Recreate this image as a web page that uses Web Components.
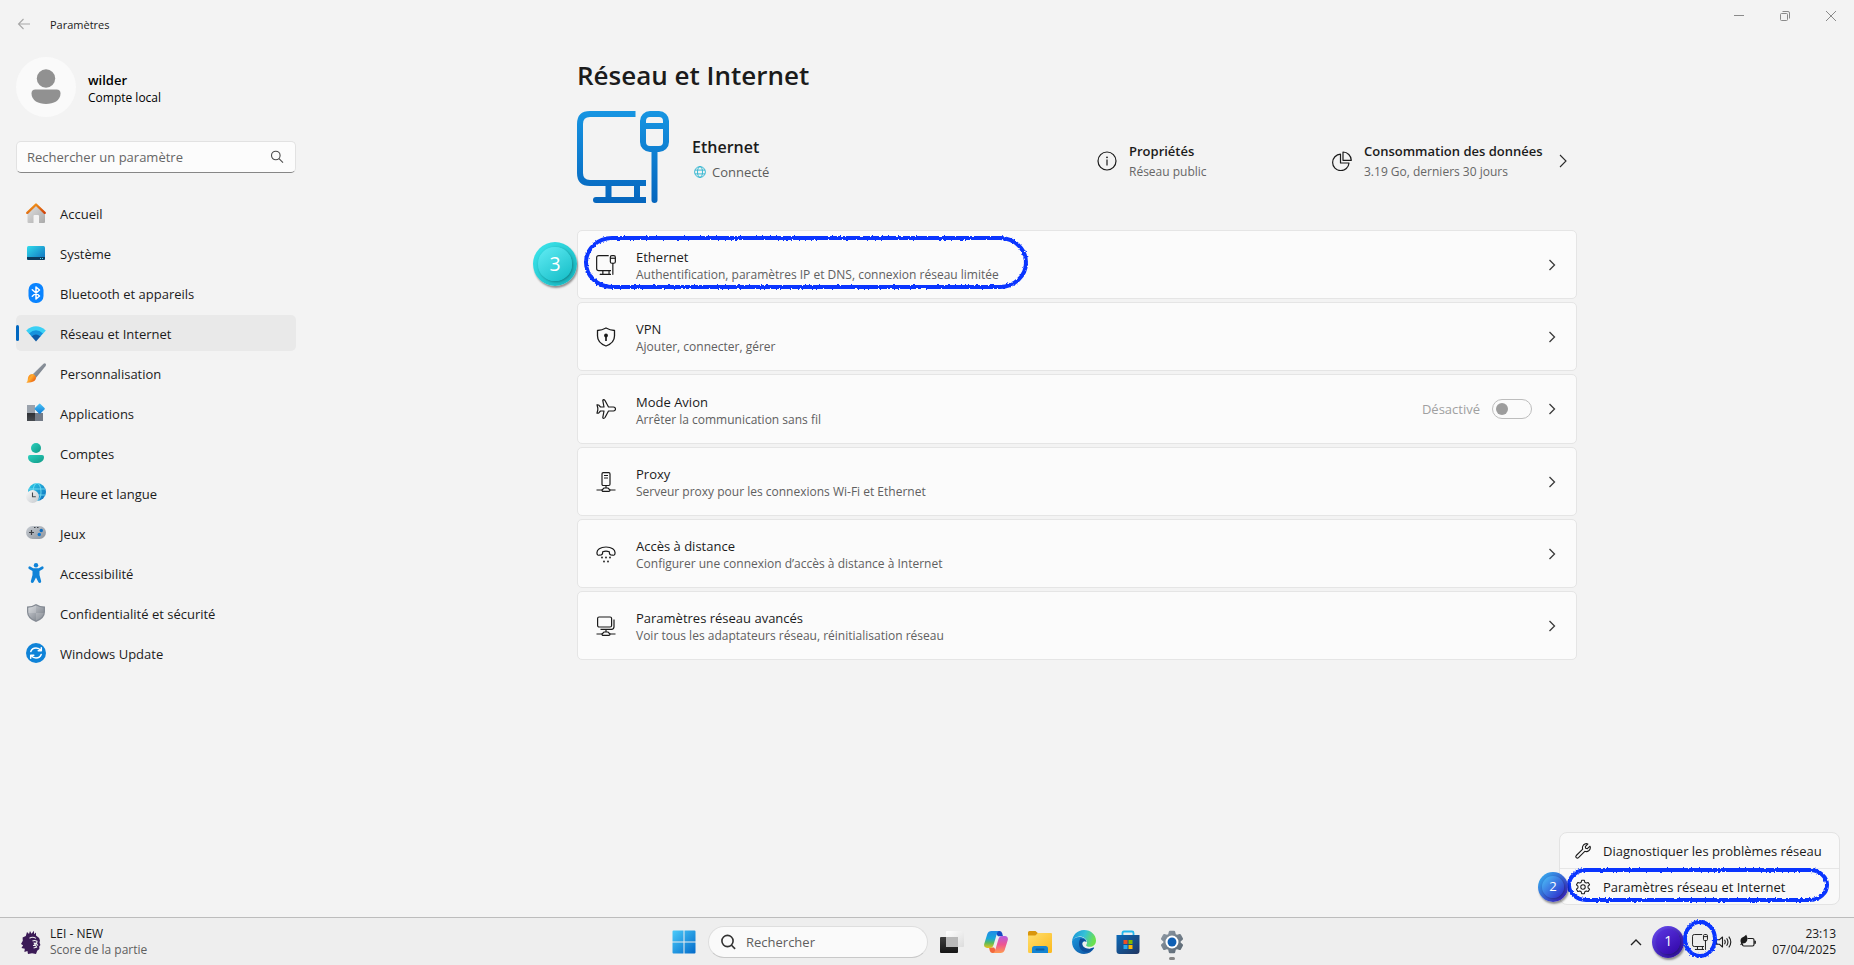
<!DOCTYPE html>
<html lang="fr">
<head>
<meta charset="utf-8">
<title>Paramètres</title>
<style>
  html, body { margin: 0; height: 100%; }
  body {
    display: flex; flex-direction: column; min-height: 100vh;
    background: #f3f3f3; color: #1b1b1b;
    font: 13px/20px "Open Sans", "Noto Sans", sans-serif;
  }
  settings-window { flex: 1; }
</style>
</head>
<body>
<settings-window></settings-window>
<task-bar></task-bar>

<script>
const ETHERNET = `<path d="M58.500 3H13Q3 3 3 13V62Q3 72 13 72H69M31.500 72V89M60 72V89M69 89H20" /><path d="M19 89h3" stroke-linecap="round"/><rect x="66" y="3" width="23" height="35" rx="7"/><path d="M66 15h23"/><path d="M77.500 38v51" stroke-linecap="round"/>`;
const GEAR = `<path stroke-linejoin="round" d="M8.300 1.600h3.400l.6 2.500 1.700 1 2.500-.8 1.700 3-1.900 1.700v2l1.900 1.700-1.700 3-2.500-.8-1.700 1-.6 2.500H8.300l-.6-2.500-1.700-1-2.500.8-1.700-3L3.700 11V9L1.800 7.300l1.700-3 2.500.8 1.700-1z"/>`;
const ICONS = {
  back: ['0 0 16 16', `<g fill="none" stroke="#a8a8a8" stroke-width="1.100"><path d="M14 8H2.500M7.500 3l-5 5 5 5"/></g>`],
  minimize: ['0 0 16 16', `<path d="M3 7.500h10" stroke="#8a8a8a"/>`],
  restore: ['0 0 16 16', `<g fill="none" stroke="#8a8a8a"><rect x="3.500" y="5.500" width="7" height="7" rx="1"/><path d="M5.500 3.500h5.500q1.500 0 1.500 1.500v5.500"/></g>`],
  close: ['0 0 16 16', `<path d="M3 3l10 10M13 3L3 13" stroke="#8a8a8a"/>`],
  avatar: ['0 0 60 60', `<circle cx="30" cy="30" r="30" fill="#fafafa"/><g fill="#919191"><circle cx="30" cy="21.500" r="9.200"/><path d="M19.500 32.500h21q4 0 4 4c0 7-7 10.500-14.500 10.500S15.500 43.500 15.500 36.500q0-4 4-4z"/></g>`],
  search: ['0 0 16 16', `<g fill="none" stroke="#4a4a4a" stroke-width="1.100"><circle cx="6.800" cy="6.500" r="4.300"/><path d="M10 9.700l4 4"/></g>`],
  searchBold: ['0 0 16 16', `<g fill="none" stroke="#333" stroke-width="1.600"><circle cx="7.500" cy="7" r="5.600"/><path d="M11.300 11l3.800 3.900"/></g>`],
  home: ['0 0 20 20', `<defs><linearGradient id="a" x2="1" y2="1"><stop stop-color="#e2e2e2"/><stop offset="1" stop-color="#a9a9a9"/></linearGradient><linearGradient id="b" x2="1" y2="1"><stop stop-color="#f6a21c"/><stop offset="1" stop-color="#d1420a"/></linearGradient></defs><path fill="url(#a)" d="M1.500 9L10 1.500 19 9v10q0 1-1 1h-5v-7q0-1-1-1H8.500q-1 0-1 1v7h-5q-1 0-1-1z"/><path fill="none" stroke="url(#b)" stroke-width="2.400" stroke-linecap="round" stroke-linejoin="round" d="M1.300 9.800L10 1.500l8.700 8.300"/>`],
  system: ['0 0 20 20', `<defs><linearGradient id="a" x2="1" y2="1"><stop stop-color="#30dcec"/><stop offset="1" stop-color="#0f6cbd"/></linearGradient></defs><rect x="1" y="3" width="18" height="14" rx="1.500" fill="url(#a)"/><path fill="#0c3b5e" d="M1 14h18v1.500q0 1.500-1.500 1.500h-15Q1 17 1 15.500z"/><path fill="#4fd8f0" d="M14 15h1v1h-1zM16 15h1v1h-1z"/>`],
  bluetooth: ['0 0 20 20', `<rect x="2.500" y="0" width="15" height="20" rx="7" fill="#0a84ff"/><path fill="none" stroke="#fff" stroke-width="1.500" stroke-linejoin="round" stroke-linecap="round" d="M6.300 6.800l7.200 6.200L10 16V4l3.500 3-7.200 6.200"/>`],
  network: ['0 0 20 20', `<path fill="#3ad0f5" d="M.2 7.500Q10-.8 19.800 7.500L17 10.800H3z"/><path fill="#1592dd" d="M3 10.500Q10 4 17 10.500L14 14H6z"/><path fill="#0d5aa7" d="M5.600 13.600Q10 9.500 14.400 13.600L10 18.500z"/>`],
  brush: ['0 0 20 20', `<defs><linearGradient id="a" x2="1" y2="1"><stop stop-color="#a6adb5"/><stop offset="1" stop-color="#656d78"/></linearGradient><linearGradient id="b" x2="1" y2=".7"><stop stop-color="#f06b0a"/><stop offset=".5" stop-color="#ffac30"/><stop offset="1" stop-color="#e8590c"/></linearGradient></defs><path fill="url(#a)" d="M6.500 11.500L17.500.8q1.300-1 2.200 0 .6 1-.1 2.200L10 14.700z"/><path fill="url(#b)" d="M6.300 11q2.700.2 3.700 3.300c.2 3.700-3.500 5.700-9.700 5.400 1.700-1.200 1.300-3 1.700-5 .5-2.300 2.300-3.700 4.300-3.700z"/>`],
  apps: ['0 0 20 20', `<defs><linearGradient id="a" x2="1" y2="1"><stop stop-color="#4dc6f8"/><stop offset="1" stop-color="#0a78d4"/></linearGradient><linearGradient id="b" x2="0" y2="1"><stop stop-color="#2e3034"/><stop offset="1" stop-color="#474b50"/></linearGradient></defs><path fill="#9aa2ac" d="M1 2h8v8H1z"/><path fill="#737b87" d="M9 10h8v8H9z"/><path fill="url(#b)" d="M1 10h8v8H1z"/><rect x="9.800" y="1.800" width="7.800" height="7.800" rx="1" transform="rotate(45 13.700 5.700)" fill="url(#a)"/>`],
  account: ['0 0 20 20', `<defs><linearGradient id="a" x2="1" y2="1"><stop stop-color="#2bd0be"/><stop offset="1" stop-color="#109a86"/></linearGradient></defs><g fill="url(#a)"><circle cx="10" cy="5" r="5"/><path d="M4 12h12q2 0 2 2c0 4-3.500 6-8 6s-8-2-8-6q0-2 2-2z"/></g>`],
  time: ['0 0 20 20', `<defs><linearGradient id="a" x2="1" y2="1"><stop stop-color="#2ccfe8"/><stop offset="1" stop-color="#0f6cbd"/></linearGradient><linearGradient id="b" x2="1" y2="1"><stop stop-color="#fafafa"/><stop offset="1" stop-color="#c4c8cc"/></linearGradient></defs><circle cx="11" cy="9" r="9" fill="url(#a)"/><g fill="none" stroke="#7fe6f6" stroke-width=".8"><ellipse cx="11" cy="9" rx="4" ry="8.800"/><path d="M3 6h16M3 12h16.500"/></g><circle cx="6.500" cy="13.500" r="6.500" fill="url(#b)"/><path d="M6.500 9.500v4.300h3.300" fill="none" stroke="#44484d" stroke-width="1.100"/>`],
  games: ['0 0 20 20', `<defs><linearGradient id="a" x2="1" y2="1"><stop stop-color="#c7ccd2"/><stop offset="1" stop-color="#8d949d"/></linearGradient></defs><rect y="3" width="20" height="13" rx="6.500" fill="url(#a)"/><path d="M3 9.500h5M5.500 7v5" stroke="#3b3f45" stroke-width="1.200"/><path d="M8 4h1.500v1H8zM11 4h1.500v1H11z" fill="#3b3f45"/><circle cx="15.300" cy="7.500" r="1.700" fill="#0f6cbd"/><circle cx="13.300" cy="11.500" r="1.700" fill="#0a78d4"/>`],
  access: ['0 0 20 20', `<g fill="#0f83d8"><circle cx="10" cy="2.200" r="2.200"/><path d="M2.700 3.700q1-.7 2 0l2.500 1.500h5.600l2.500-1.500q1-.7 2 0 1 1.400-.3 2.200l-3.500 2v4l1.700 6.300q0 1.500-1.300 1.800-1.200 0-1.600-1L10 14.500 7.700 19q-.5 1-1.600 1-1.300-.4-1.300-1.800l1.700-6.300v-4l-3.500-2q-1.300-.8-.3-2.200z"/></g>`],
  shield: ['0 0 20 20', `<defs><linearGradient id="a" x2="1" y2="1"><stop stop-color="#d0d3d8"/><stop offset="1" stop-color="#70767f"/></linearGradient></defs><path fill="#858b94" d="M10 1q4 2.500 9 2.600V9q0 6.500-9 10Q1 15.500 1 9V3.600Q6 3.500 10 1z"/><path fill="url(#a)" d="M10 2.500q3.500 2 7.700 2.300V9q0 5.500-7.700 8.600Q2.300 14.500 2.300 9V4.800Q6.500 4.500 10 2.500z"/><path fill="#fff" opacity=".18" d="M10 2.500V10H2.300V4.800Q6.500 4.500 10 2.500zM10 10h7.700q-.8 4.800-7.700 7.600z"/>`],
  update: ['0 0 20 20', `<circle cx="10" cy="10" r="10" fill="#0f83d8"/><g fill="none" stroke="#fff" stroke-width="1.500" stroke-linecap="round" stroke-linejoin="round"><path d="M4.800 8.500Q6 5 10 5q3 0 5 2.600M15.300 4.700v3.100h-3.100M15.200 11.500Q14 15 10 15q-3 0-5-2.600M4.700 15.300v-3.100h3.100"/></g>`],
  heroEthernet: ['0 0 92 92', `<defs><linearGradient id="a" gradientUnits="userSpaceOnUse" x1="0" y1="0" x2="0" y2="92"><stop stop-color="#1795e2"/><stop offset="1" stop-color="#0565bd"/></linearGradient></defs><g fill="none" stroke="url(#a)" stroke-width="6">${ETHERNET}</g>`],
  ethernet: ['0 0 92 92', `<g fill="none" stroke="currentColor" stroke-width="5.500">${ETHERNET}</g>`],
  globe: ['0 0 12 12', `<g fill="none" stroke="#2bb3cf" stroke-width=".9"><circle cx="6" cy="6" r="5.400"/><ellipse cx="6" cy="6" rx="2.500" ry="5.400"/><path d="M1 4.100h10M1 7.900h10"/></g>`],
  info: ['0 0 20 20', `<g fill="none" stroke="currentColor" stroke-width="1.200"><circle cx="10" cy="10" r="9"/><path d="M10 8.500v6"/></g><circle cx="10" cy="6.300" r=".9" fill="currentColor"/>`],
  usage: ['0 0 20 20', `<g fill="none" stroke="currentColor" stroke-width="1.200" stroke-linejoin="round"><path d="M11 1a8.500 8.500 0 0 1 8.300 8.300H11z"/><path d="M8.500 3.200A8.200 8.200 0 1 0 17 12H8.500z"/></g>`],
  chevron: ['0 0 16 16', `<path fill="none" stroke="#3a3a3a" stroke-width="1.300" d="M5.500 3l5 5-5 5"/>`],
  chevronLarge: ['0 0 16 16', `<path fill="none" stroke="#2a2a2a" stroke-width="1.100" d="M5 2l6 6-6 6"/>`],
  chevronUp: ['0 0 16 16', `<path fill="none" stroke="#222" stroke-width="1.400" d="M3 11l5-5 5 5"/>`],
  vpn: ['0 0 20 20', `<path fill="none" stroke="currentColor" stroke-width="1.300" stroke-linejoin="round" d="M10 1q4 2.200 8.500 2.500V9q0 6.800-8.500 10Q1.500 15.800 1.500 9V3.500Q6 3.200 10 1z"/><circle cx="10" cy="8.500" r="1.900" fill="currentColor"/><path stroke="currentColor" stroke-width="1.700" d="M10 9v5"/>`],
  plane: ['0 0 20 20', `<path fill="none" stroke="currentColor" stroke-width="1.200" stroke-linejoin="round" d="M12.500 8h5q2 .3 2 2t-2 2h-5L9 18.500q-.5.800-1.500.8-.8-.1-.7-1L8 12H4.500L3 13.700q-1 .8-2 .4l.8-3.100V9L1 5.900q1-.4 2 .4L4.500 8H8L6.800 1.700q-.1-.9.7-1 1 0 1.500.8z"/>`],
  proxy: ['0 0 20 20', `<g fill="none" stroke="currentColor" stroke-width="1.200"><rect x="6" y=".7" width="8" height="12.800" rx="1.200"/><path d="M8 3.500h4M8 6h4M10 13.500v2.500M.5 18h5.500M14 18h5.500"/><path d="M8 16h4l2 2q0 1.400-1.200 1.400H7.200Q6 19.400 6 18z"/></g>`],
  dialup: ['0 0 20 20', `<path fill="none" stroke="currentColor" stroke-width="1.200" stroke-linejoin="round" d="M1 9.300C.5 5.500 4.500 3 10 3s9.500 2.500 9 6.300q-.3 2.200-2.200 1.900l-2-.4q-1.300-.3-1.400-1.700l-.1-1.400q-3.300-1.100-6.600 0l-.1 1.400q-.1 1.400-1.400 1.700l-2 .4Q1.300 11.500 1 9.300z"/><g fill="currentColor"><circle cx="6" cy="13.500" r=".9"/><circle cx="10" cy="13.500" r=".9"/><circle cx="14" cy="13.500" r=".9"/><circle cx="8" cy="17.500" r=".9"/><circle cx="12" cy="17.500" r=".9"/></g>`],
  advanced: ['0 0 20 20', `<g fill="none" stroke="currentColor" stroke-width="1.200"><rect x="1.600" y="1" width="14" height="10" rx="1.500"/><path d="M4.500 13.300h11q2.500 0 2.500-2.500V3.500M10 13.300V16M.5 18h5.500M14 18h5.500"/><path d="M8 16h4l2 2q0 1.400-1.200 1.400H7.200Q6 19.400 6 18z"/></g>`],
  wrench: ['0 0 16 16', `<path fill="none" stroke="currentColor" stroke-width="1.100" stroke-linejoin="round" d="M12.800 1Q10.500 0 8.500 2 6.900 4 7.700 6.200L1.300 12.500q-1 1.100 0 2.200 1.100 1 2.200 0L9.800 8.300q2.200.9 4.200-.8 2-2 1-4.300l-2.600 2.500-1.700-.4-.4-1.700z"/>`],
  gear: ['0 0 20 20', `<g fill="none" stroke="currentColor" stroke-width="1.300">${GEAR}<circle cx="10" cy="10" r="2.800"/></g>`],
  windows: ['0 0 24 24', `<defs><linearGradient id="a" gradientUnits="userSpaceOnUse" x1="0" y1="0" x2="24" y2="24"><stop stop-color="#4ccdfb"/><stop offset="1" stop-color="#0067c8"/></linearGradient></defs><path fill="url(#a)" d="M1.500.5H11.500v11H.5v-10q0-1 1-1zM12.500.5h10q1 0 1 1v10h-11zM.5 12.500h11v11h-10q-1 0-1-1zM12.500 12.500h11v10q0 1-1 1h-10z"/>`],
  taskview: ['0 0 24 24', `<defs><linearGradient id="a" x2="0" y2="1"><stop stop-color="#3e3e3e"/><stop offset="1" stop-color="#151515"/></linearGradient><linearGradient id="b" x2="1" y2="1"><stop stop-color="#fff"/><stop offset="1" stop-color="#dcdcdc"/></linearGradient></defs><rect y="7" width="18" height="16" rx="1" fill="url(#a)"/><rect x="6" y="1" width="18" height="16" rx="1" fill="url(#b)"/><path fill="#b9b9b9" d="M6 7h12v10H6z"/>`],
  copilot: ['0 0 24 24', `<defs><linearGradient id="a" x2="0" y2="1"><stop stop-color="#1f8be8"/><stop offset=".45" stop-color="#19a7d8"/><stop offset=".7" stop-color="#5cbb5a"/><stop offset="1" stop-color="#ecc21a"/></linearGradient><linearGradient id="b" x2="0" y2="1"><stop stop-color="#b45be0"/><stop offset=".5" stop-color="#ee5592"/><stop offset="1" stop-color="#ff9a50"/></linearGradient></defs><path fill="#1649c4" d="M10 1h5.500q2 0 2.600 2l.9 3.200h-5z"/><path fill="#f3683c" d="M14 23H8.500q-2 0-2.600-2L5 17.500h5z"/><path fill="url(#a)" d="M7.500 1H15q-1.500.5-2 2.300L9.500 15q-.9 3-3.700 3H3q-3.500-.4-2.800-4L3.300 4Q4.300 1 7.500 1z"/><path fill="url(#b)" d="M16.500 23H9q1.500-.5 2-2.300L14.500 9q.9-3 3.700-3H21q3.500.4 2.800 4l-3.100 10q-1 3-4.200 3z"/>`],
  explorer: ['0 0 24 24', `<defs><linearGradient id="a" x2="1" y2="1"><stop stop-color="#ffdf6e"/><stop offset="1" stop-color="#fbb81c"/></linearGradient></defs><path fill="#d9960c" d="M0 2.500Q0 1 1.500 1h6L10 3.300 7.500 6H0z"/><path fill="url(#a)" d="M0 5.500h7.500L10 3h13q1 0 1 1v17.500q0 1.500-1.500 1.500h-21Q0 23 0 21.500z"/><path fill="#1484d2" d="M4 23v-4.500Q4 16 6.500 16h11q2.500 0 2.500 2.500V23z"/><rect x="7.500" y="18.500" width="9" height="2" rx="1" fill="#0a5ea3"/>`],
  edge: ['0 0 24 24', `<defs><linearGradient id="a" x2="1" y2=".3"><stop stop-color="#168fd8"/><stop offset=".55" stop-color="#35c1d8"/><stop offset="1" stop-color="#6be04f"/></linearGradient><linearGradient id="b" x2="1" y2="1"><stop stop-color="#1b96dc"/><stop offset="1" stop-color="#0c4f9e"/></linearGradient></defs><path fill="url(#b)" d="M.1 11C1 8.500 4 7 7.500 7c4.500 0 7 2.500 7 5-1-1.200-3.800-1-4.200 1.500-.4 3.500 4 6.500 9 4.700 1.500-.6 2.600-1 2.900-.2C20 21.800 16.500 24 12 24 5 24-.5 18.500.1 11z"/><path fill="#0d4e9b" d="M8.500 8.500C6 12 6.500 18 10.500 21c3 2 7.500 1.500 11.500-3.200-5 2.700-11.500.2-11.900-3.800-.2-2.300 2.400-4 4.300-2-.3-2-2.900-3.700-5.900-3.500z"/><path fill="url(#a)" d="M0 11.500C.5 5 5.500 0 12 0c7 0 12 5 12 10.500 0 4-2.900 6.300-6.200 6.300-2.600 0-4-1-3.600-1.900.4-.8.8-1.400.8-2.500C14.800 9 11.500 6.500 7.500 6.600 4 6.700 1 8.700 0 11.500z"/>`],
  store: ['0 0 24 24', `<defs><linearGradient id="a" x2="1" y2="1"><stop stop-color="#0c6ab8"/><stop offset="1" stop-color="#213560"/></linearGradient></defs><path fill="none" stroke="#22b8ee" stroke-width="1.800" d="M6.500 7V3q0-1.500 1.500-1.500h8q1.500 0 1.500 1.500v4"/><path fill="url(#a)" d="M.5 5h23v16q0 3-3 3h-17q-3 0-3-3z"/><path fill="#f04e23" d="M7.500 10h4v4h-4z"/><path fill="#7fba00" d="M12.500 10h4v4h-4z"/><path fill="#2aa8ee" d="M7.500 15h4v4h-4z"/><path fill="#ffb900" d="M12.500 15h4v4h-4z"/>`],
  settings: ['0 0 20 20', `<defs><linearGradient id="a" x2="1" y2="1"><stop stop-color="#8e99a4"/><stop offset="1" stop-color="#596672"/></linearGradient></defs><g fill="url(#a)" stroke="url(#a)" stroke-width="2">${GEAR}</g><circle cx="10" cy="10" r="5.400" fill="#fff"/><circle cx="10" cy="10" r="3.700" fill="#1060b4"/>`],
  lion: ['0 0 20 24', `<path fill="#3b1a56" d="M6 2l2 2 1-3 1.500 2.700L13 .8v3.400l2-1.700v3q3.200 1.700 4 5l-.5 2 .9 2.500-1.200 1.500.2 2.500-2.200 1.700L15 24l-4-.8-4 .8-.6-3-3 1 .4-3.200L.5 18l1.600-2.700L0 14l1.800-3.300L1.600 7.500 4.800 6z"/><path fill="none" stroke="#eee" stroke-width="1.100" d="M8.500 8.200q3-2 6.500.2M11.500 11q2-1 4.500.2l-.5 2.600 1.500 1.700M12 15.500l2.600-.3 1 2-3 .8"/><path fill="#eee" d="M12.500 12.500l3 .2-.5 2h-1.800z"/>`],
  sound: ['0 0 16 16', `<g fill="none" stroke="currentColor" stroke-width="1.100" stroke-linejoin="round"><path d="M.5 5.800h2.800L6.500 3v10L3.300 10.200H.5zM8.500 5.800q1.500 2.200 0 4.400M10.600 4.200q2.700 3.800 0 7.600M12.800 2.600q4 5.400 0 10.800"/></g>`],
  battery: ['0 0 16 16', `<path fill="none" stroke="currentColor" stroke-width="1.200" d="M7.500 4.500h5q1.500 0 1.500 1.500v4.500q0 1.500-1.500 1.500H3.800q-1.300 0-1.300-1.500V10M15.300 6.700v3"/><path fill="currentColor" d="M6.200.8q2 3.500.8 6.200-1.300 2.500-4.200 2.500L1 11.300l-.8-.8 1-1.300Q-.5 6 1.800 3.800 4.300 2.800 6.200.8z"/>`],
};

/* Base class: parses the markup into an open shadow root. */
class Base extends HTMLElement {
  render(css, html) {
    const t = document.createElement('template');
    t.innerHTML = `<style>*,:host{box-sizing:border-box}h1,h2,p{margin:0}a{color:inherit;text-decoration:none}button{font:inherit;color:inherit;background:none;border:0;padding:0;text-align:left}${css}</style>${html}`;
    if (!this.shadowRoot) this.attachShadow({ mode: 'open' });
    this.shadowRoot.replaceChildren(t.content.cloneNode(true));
  }
}

customElements.define('ui-icon', class extends Base {
  connectedCallback() {
    const [box, body] = ICONS[this.getAttribute('name')];
    const size = this.getAttribute('size') || 20;
    this.render(`:host{display:block;flex:none;width:${size}px;height:${size}px}svg{display:block;width:100%;height:100%}`,
      `<svg viewBox="${box}" aria-hidden="true">${body}</svg>`);
  }
});

/* Numbered, glossy step marker. */
customElements.define('step-badge', class extends Base {
  connectedCallback() {
    this.render(`:host{display:grid;place-items:center;flex:none;width:var(--d);height:var(--d);border-radius:50%;color:#fff;
      background:var(--rim);box-shadow:1px 2px 2px #0006;font-size:calc(var(--d) * .44);line-height:1}
      span{display:grid;place-items:center;width:76%;height:76%;border-radius:50%;background:var(--face);box-shadow:1px 1px 3px #0005}`,
      `<span><slot></slot></span>`);
  }
});

/* Hand-drawn marker outline around a target. */
customElements.define('marker-ring', class extends Base {
  connectedCallback() {
    this.render(`:host{display:block;position:absolute;pointer-events:none}svg{display:block;width:100%;height:100%;overflow:visible}
      rect{x:2px;y:2px;width:calc(100% - 4px);height:calc(100% - 4px);fill:none;stroke:#0a35ff;stroke-width:4px;filter:url(#rough)}`,
      `<svg aria-hidden="true"><defs><filter id="rough" x="-10%" y="-10%" width="120%" height="120%" color-interpolation-filters="sRGB"><feTurbulence type="fractalNoise" baseFrequency=".5" numOctaves="2" seed="4"/><feDisplacementMap in="SourceGraphic" scale="3" xChannelSelector="R" yChannelSelector="G"/></filter></defs><rect rx="${this.getAttribute('radius')}"/></svg>`);
  }
});

customElements.define('title-bar', class extends Base {
  connectedCallback() {
    this.render(`:host{display:flex;justify-content:space-between;align-items:flex-start;height:48px}
      .left{display:flex;align-items:center;gap:18px;height:48px;padding-left:16px;font-size:11px}.left span{padding-top:2px}
      .controls{display:flex}.controls button{display:grid;place-items:center;width:46px;height:32px}`,
      `<div class="left"><button aria-label="Retour"><ui-icon name="back" size="16"></ui-icon></button><span>Paramètres</span></div>
       <div class="controls">
        <button aria-label="Réduire"><ui-icon name="minimize" size="16"></ui-icon></button>
        <button aria-label="Restaurer"><ui-icon name="restore" size="16"></ui-icon></button>
        <button aria-label="Fermer"><ui-icon name="close" size="16"></ui-icon></button></div>`);
  }
});

customElements.define('nav-item', class extends Base {
  connectedCallback() {
    this.render(`:host{display:block}
      a{display:flex;align-items:center;gap:14px;height:36px;padding-left:10px;border-radius:5px;position:relative}
      span{padding-top:2px}
      :host([active]) a{background:#e9e9e9}
      :host([active]) a::before{content:"";position:absolute;left:0;top:10px;width:3px;height:16px;border-radius:2px;background:#0067c0}`,
      `<a href="#${this.getAttribute('icon')}"><ui-icon name="${this.getAttribute('icon')}"></ui-icon><span><slot></slot></span></a>`);
  }
});

customElements.define('side-bar', class extends Base {
  connectedCallback() {
    const items = [['home','Accueil'],['system','Système'],['bluetooth','Bluetooth et appareils'],['network','Réseau et Internet'],['brush','Personnalisation'],['apps','Applications'],['account','Comptes'],['time','Heure et langue'],['games','Jeux'],['access','Accessibilité'],['shield','Confidentialité et sécurité'],['update','Windows Update']];
    this.render(`:host{display:flex;flex-direction:column;padding:9px 4px 0 16px}
      .user{display:flex;align-items:center;gap:12px;color:#000;margin-bottom:24px}.user div{padding-top:4px}
      .user strong,.user span{display:block;line-height:18px}.user strong{font-weight:600}.user span{font-size:12px}
      .search{display:flex;align-items:center;height:32px;padding:0 10px;background:#fcfcfc;border:1px solid #e2e2e2;border-bottom-color:#868686;border-radius:5px;margin-bottom:22px}
      input{flex:1;min-width:0;border:0;background:none;padding:0;font:inherit;outline:0}input::placeholder{color:#666;opacity:1}
      nav{display:grid;gap:4px}`,
      `<div class="user"><ui-icon name="avatar" size="60"></ui-icon><div><strong>wilder</strong><span>Compte local</span></div></div>
       <div class="search"><input type="search" aria-label="Rechercher un paramètre" placeholder="Rechercher un paramètre"><ui-icon name="search" size="16"></ui-icon></div>
       <nav>${items.map(([i, t]) => `<nav-item icon="${i}"${i === 'network' ? ' active' : ''}>${t}</nav-item>`).join('')}</nav>`);
  }
});

customElements.define('network-summary', class extends Base {
  connectedCallback() {
    this.render(`:host{display:grid;grid-template-columns:1fr 235px 245px;height:92px}
      .main{display:flex;gap:23px}
      .text{padding-top:6px;display:flex;flex-direction:column;justify-content:center}
      h2{font-size:16px;line-height:24px;font-weight:600}
      .state{display:flex;align-items:center;gap:6px;line-height:26px;color:#5c5c5c;padding-left:2px}
      a{display:flex;align-items:center;gap:12px;padding-top:8px}
      strong{display:block;font-weight:600;line-height:22px}small{display:block;font-size:12px;line-height:20px;color:#666}
      .usage{padding-right:10px}.usage span{flex:1;white-space:nowrap}`,
      `<div class="main"><ui-icon name="heroEthernet" size="92"></ui-icon><div class="text"><h2>Ethernet</h2><p class="state"><ui-icon name="globe" size="12"></ui-icon>Connecté</p></div></div>
       <a href="#proprietes"><ui-icon name="info"></ui-icon><span><strong>Propriétés</strong><small>Réseau public</small></span></a>
       <a class="usage" href="#consommation"><ui-icon name="usage"></ui-icon><span><strong>Consommation des données</strong><small>3.19 Go, derniers 30 jours</small></span><ui-icon name="chevronLarge" size="16"></ui-icon></a>`);
  }
});

customElements.define('setting-card', class extends Base {
  connectedCallback() {
    this.render(`:host{display:flex;align-items:center;gap:12px;position:relative;min-height:69px;padding:0 16px 0 18px;background:#fbfbfb;border:1px solid #e5e5e5;border-radius:5px}
      a{flex:1;display:flex;align-items:center;gap:20px}
      .text{padding-top:3px;line-height:18px}.text small{display:block;font-size:12px;color:#606060}`,
      `<a href="#${this.getAttribute('icon')}"><ui-icon name="${this.getAttribute('icon')}"></ui-icon><span class="text"><slot name="title"></slot><small><slot></slot></small></span></a>
       <slot name="control"></slot><ui-icon name="chevron" size="16"></ui-icon><slot name="overlay"></slot>`);
  }
});

customElements.define('toggle-switch', class extends Base {
  connectedCallback() {
    this.render(`:host{display:block}label{display:flex;align-items:center;gap:12px;color:#a0a0a0}
      input{appearance:none;margin:0;display:flex;align-items:center;width:40px;height:20px;padding:0 3px;border:1px solid #bdbdbd;border-radius:10px;background:#fbfbfb}
      input::before{content:"";width:12px;height:12px;border-radius:50%;background:#9d9d9d}`,
      `<label><slot></slot><input type="checkbox" role="switch" disabled></label>`);
  }
});

customElements.define('settings-window', class extends Base {
  connectedCallback() {
    this.render(`:host{display:flex;flex-direction:column;position:relative}
      .body{display:grid;grid-template-columns:300px 1fr}
      main{width:100%;max-width:1000px;margin:0 auto;padding-top:9px}
      h1{font-size:26px;line-height:36px;font-weight:600;margin-bottom:18px}
      .cards{display:grid;gap:3px;margin-top:27px}
      .flight{min-height:70px}
      marker-ring{left:6px;top:5px;width:444px;height:53px}
      step-badge{--d:44px;--rim:linear-gradient(135deg,#3fe8ee,#12b3bd);--face:linear-gradient(145deg,#62ecf4,#12bcc6);position:absolute;left:-45px;top:11px}
      quick-menu{position:absolute;right:14px;bottom:12px}`,
      `<title-bar></title-bar>
       <div class="body"><side-bar></side-bar>
        <main><h1>Réseau et Internet</h1><network-summary></network-summary>
         <div class="cards">
          <setting-card icon="ethernet"><span slot="title">Ethernet</span>Authentification, paramètres IP et DNS, connexion réseau limitée<marker-ring slot="overlay" radius="26"></marker-ring><step-badge slot="overlay">3</step-badge></setting-card>
          <setting-card icon="vpn"><span slot="title">VPN</span>Ajouter, connecter, gérer</setting-card>
          <setting-card icon="plane" class="flight"><span slot="title">Mode Avion</span>Arrêter la communication sans fil<toggle-switch slot="control">Désactivé</toggle-switch></setting-card>
          <setting-card icon="proxy"><span slot="title">Proxy</span>Serveur proxy pour les connexions Wi-Fi et Ethernet</setting-card>
          <setting-card icon="dialup"><span slot="title">Accès à distance</span>Configurer une connexion d’accès à distance à Internet</setting-card>
          <setting-card icon="advanced"><span slot="title">Paramètres réseau avancés</span>Voir tous les adaptateurs réseau, réinitialisation réseau</setting-card>
         </div></main></div>
       <quick-menu></quick-menu>`);
  }
});

customElements.define('quick-menu', class extends Base {
  connectedCallback() {
    this.render(`:host{display:block;width:281px;background:#f9f9f9;border:1px solid #e3e3e3;border-radius:8px}
      button{display:flex;align-items:center;gap:12px;width:100%;height:35px;padding-left:15px;white-space:nowrap}
      button + button{border-top:1px solid #e6e6e6;height:36px}
      marker-ring{left:7px;bottom:2px;width:262px;height:34px}
      step-badge{--d:30px;--rim:linear-gradient(135deg,#35b9f2,#3a10b8);--face:linear-gradient(135deg,#4cc4f8,#2b22c8);position:absolute;left:-22px;bottom:2px}`,
      `<div role="menu"><button role="menuitem"><ui-icon name="wrench" size="16"></ui-icon>Diagnostiquer les problèmes réseau</button>
       <button role="menuitem"><ui-icon name="gear" size="16"></ui-icon>Paramètres réseau et Internet</button></div>
       <marker-ring radius="17"></marker-ring><step-badge>2</step-badge>`);
  }
});

customElements.define('task-bar', class extends Base {
  connectedCallback() {
    const apps = [['taskview','Vue des tâches'],['copilot','Copilot'],['explorer','Explorateur'],['edge','Edge'],['store','Store'],['settings','Paramètres']];
    this.render(`:host{display:grid;grid-template-columns:1fr auto 1fr;align-items:center;height:48px;background:#eee;border-top:1px solid #bcbcbc}
      .widget{display:flex;align-items:center;gap:7px;padding-left:19px;font-size:12px;line-height:16px}.widget small{display:block;font-size:12px;color:#5e5e5e}
      .center{display:flex;align-items:center;gap:12px;padding-left:2px}
      .search{display:flex;align-items:center;gap:10px;width:220px;height:32px;padding:0 11px;background:#fafafa;border:1px solid #dedede;border-bottom-color:#c8c8c8;border-radius:16px}
      input{flex:1;min-width:0;border:0;background:none;padding:0;font:inherit;outline:0}input::placeholder{color:#5e5e5e;opacity:1}
      .apps{display:flex;gap:20px}.apps button{position:relative}
      .apps button:last-child::after{content:"";position:absolute;left:9px;bottom:-6px;width:6px;height:3px;border-radius:2px;background:#868686}
      .tray{display:flex;align-items:center;justify-content:flex-end;gap:8px;padding-right:18px}
      .net{position:relative}
      marker-ring{left:-9px;top:-14px;width:34px;height:38px}
      step-badge{--d:32px;--rim:linear-gradient(145deg,#6a4cf0,#2a0a9a);--face:linear-gradient(145deg,#5a35e0,#3206a8)}
      time{display:block;margin-left:8px;font-size:12px;line-height:16px;text-align:right}`,
      `<button class="widget"><ui-icon name="lion" size="24"></ui-icon><span>LEI - NEW<small>Score de la partie</small></span></button>
       <div class="center"><button aria-label="Démarrer"><ui-icon name="windows" size="24"></ui-icon></button>
        <div class="search"><ui-icon name="searchBold" size="16"></ui-icon><input type="search" aria-label="Rechercher" placeholder="Rechercher"></div>
        <div class="apps">${apps.map(([i, t]) => `<button aria-label="${t}"><ui-icon name="${i}" size="24"></ui-icon></button>`).join('')}</div></div>
       <div class="tray"><button aria-label="Icônes masquées"><ui-icon name="chevronUp" size="16"></ui-icon></button><step-badge>1</step-badge>
        <button class="net" aria-label="Réseau"><ui-icon name="ethernet" size="16"></ui-icon><marker-ring radius="17"></marker-ring></button>
        <button aria-label="Volume"><ui-icon name="sound" size="16"></ui-icon></button>
        <button aria-label="Batterie"><ui-icon name="battery" size="16"></ui-icon></button>
        <time datetime="2025-04-07T23:13">23:13<br>07/04/2025</time></div>`);
  }
});
</script>
</body>
</html>
